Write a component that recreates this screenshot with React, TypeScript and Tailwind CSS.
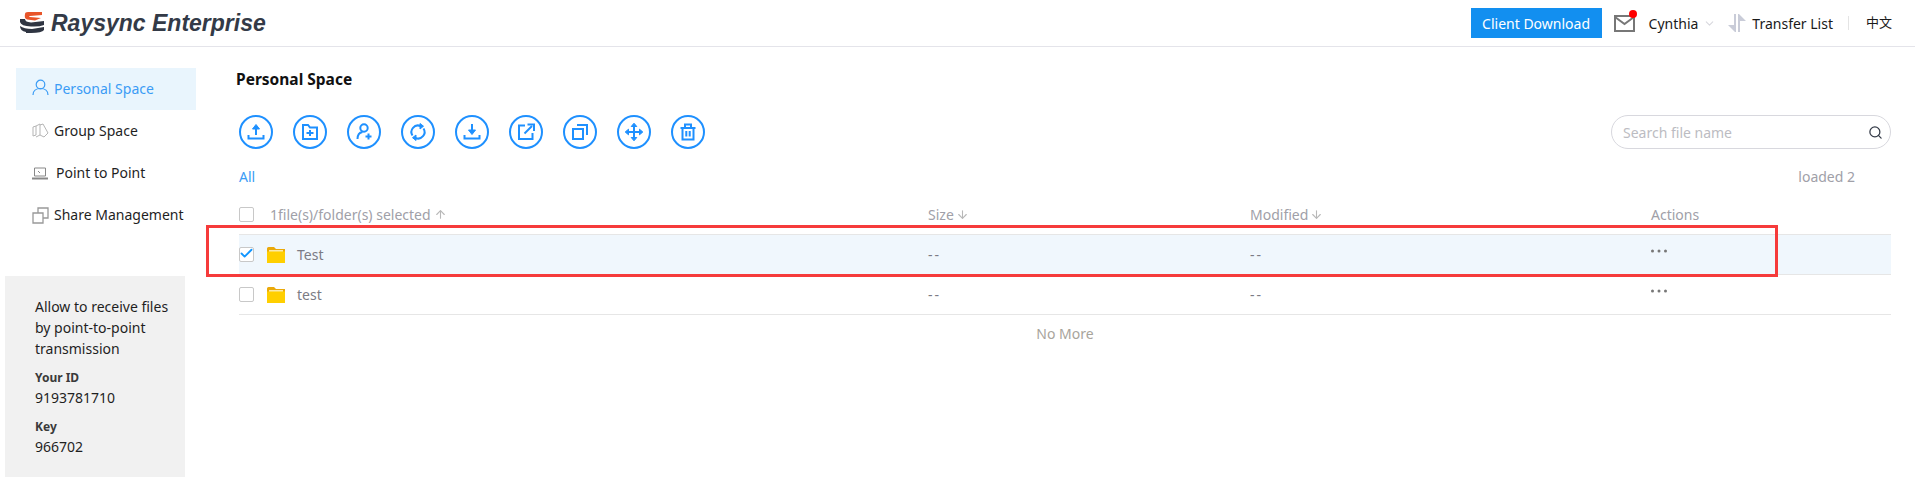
import { ChevronDown, Search, ArrowUp, ArrowDown, Check } from "lucide-react";

const font = "font-['Noto_Sans','Noto_Sans_CJK_SC',sans-serif]";

function Logo() {
  return (
    <svg width="26" height="24" viewBox="0 0 26 24" className="shrink-0">
      <path d="M6 3 Q6 1 9 1 L23 1 L23 4 L11 5 Q9 5.500 11 6 L22 7 L16 9.500 L8 8.500 Q5 7.500 6 3Z" fill="#e8552a" />
      <path d="M1 8 L6 8 Q6 11 12 11.500 L25 10 L25 14 Q20 16 12 15.500 Q2 15 1 11Z" fill="#2f3542" />
      <path d="M1 15 Q5 18 13 18 L25 16 L25 19 Q23 22 12 22 L7 22 L7 21 Q1 20 1 15Z" fill="#2f3542" />
    </svg>
  );
}

function RoundIcon({ children }: { children: React.ReactNode }) {
  return (
    <button className="w-[34px] h-[34px] rounded-full border-2 border-[#1e90ff] flex items-center justify-center shrink-0">
      <svg width="20" height="20" viewBox="0 0 20 20" fill="none" stroke="#1e90ff" strokeWidth="2">
        {children}
      </svg>
    </button>
  );
}

const toolbar = [
  <>
    <path d="M10 13V6" />
    <path d="M6.500 7 L10 2.500 L13.500 7Z" fill="#1e90ff" strokeWidth="1" />
    <path d="M2.500 13v3.500h15V13" />
  </>,
  <>
    <path d="M3 3h5l2 2.500h7V17H3Z" />
    <path d="M6.500 11h7M10 8v6" />
  </>,
  <>
    <circle cx="10" cy="6" r="3.700" />
    <path d="M3.500 17c0-4 2-6.500 5-7" />
    <path d="M11.500 14.500h6M14.500 11.500v6" />
  </>,
  <>
    <path d="M4.500 13.500A6.500 6.500 0 0 1 12.500 4" />
    <path d="M15.500 6.500A6.500 6.500 0 0 1 7.500 16" />
    <path d="M12 1.500v5.500l3.500-2.800Z" fill="#1e90ff" strokeWidth="1" />
    <path d="M8 13v5.500l-3.500-2.800Z" fill="#1e90ff" strokeWidth="1" />
  </>,
  <>
    <path d="M10 2v7" />
    <path d="M6.500 8 L10 12.500 L13.500 8Z" fill="#1e90ff" strokeWidth="1" />
    <path d="M2.500 13v3.500h15V13" />
  </>,
  <>
    <path d="M9 3.500H3V17h13.500v-6" />
    <path d="M8.500 11.500 16 4" />
    <path d="M11.500 2.500h6.500V9" strokeWidth="2" />
  </>,
  <>
    <path d="M3 7h10v10H3Z" />
    <path d="M7 3h10v10" />
  </>,
  <>
    <path d="M10 3v14M3 10h14" />
    <path d="M7.200 4.500 10 1.200l2.800 3.300ZM7.200 15.500l2.800 3.300 2.800-3.300ZM4.500 7.200 1.200 10l3.300 2.800ZM15.500 7.200l3.300 2.800-3.300 2.800Z" fill="#1e90ff" strokeWidth="1" />
  </>,
  <>
    <path d="M2.500 6h15" />
    <path d="M7 6V2.500h6V6" />
    <path d="M4.500 6v11.500h11V6" />
    <path d="M8.300 9v5.500M11.700 9v5.500" />
  </>,
];

function Folder() {
  return (
    <svg width="18" height="16" viewBox="0 0 18 16" className="shrink-0">
      <path d="M0 1.500Q0 0 1.500 0H7l2 2h9v14H0Z" fill="#eaa90a" />
      <rect x="2" y="3" width="14" height="2" fill="#fbe9a8" />
      <rect y="4.500" width="18" height="11.500" fill="#ffcf00" />
    </svg>
  );
}

function Box({ checked }: { checked?: boolean }) {
  return (
    <span className="relative w-[15px] h-[15px] rounded-[2px] border border-[#c8c8c8] bg-white shrink-0">
      {checked && <Check size={15} strokeWidth={3} className="absolute -left-[1px] -top-[2px] text-[#1296ff]" />}
    </span>
  );
}

function Dots() {
  return (
    <svg width="16" height="4" viewBox="0 0 16 4" fill="#777" className="-mt-[7px]">
      <circle cx="1.500" cy="2" r="1.500" />
      <circle cx="8" cy="2" r="1.500" />
      <circle cx="14.500" cy="2" r="1.500" />
    </svg>
  );
}

function NavItem({ label, icon, active, gap }: { label: string; icon: React.ReactNode; active?: boolean; gap?: string }) {
  return (
    <div className={`h-[42px] flex items-center pl-[16px] ${gap ?? "gap-[7px]"} ${active ? "bg-[#e9f5fd] text-[#3b9cf5]" : "text-[#1f1f1f]"}`}>
      {icon}
      <span className="text-[14px] pb-[2px]">{label}</span>
    </div>
  );
}

function Row({ name, selected }: { name: string; selected?: boolean }) {
  return (
    <div className={`h-[40px] flex items-center border-b border-[#e6e6e6] text-[14px] text-[#7b7b85] ${selected ? "bg-[#f0f7fd]" : ""}`}>
      <div className="w-[689px] flex items-center">
        <Box checked={selected} />
        <span className="ml-[13px]"><Folder /></span>
        <span className="ml-[12px]">{name}</span>
      </div>
      <div className="w-[322px] tracking-[2px]">--</div>
      <div className="w-[401px] tracking-[2px]">--</div>
      <Dots />
    </div>
  );
}

export default function App() {
  return (
    <div className={`${font} relative w-[1915px] h-[496px] bg-white overflow-hidden`}>
      {/* header */}
      <header className="h-[47px] border-b border-[#e4e4ea] flex items-center justify-between pl-[19px] pr-[23px]">
        <div className="flex items-center gap-[6px]">
          <Logo />
          <span className="font-['Liberation_Sans',sans-serif] italic font-bold text-[23px] text-[#333a47]">Raysync Enterprise</span>
        </div>
        <div className="flex items-center text-[14px] text-[#1a1a1a]">
          <div className="w-[131px] h-[30px] bg-[#128ff0] text-white flex items-center justify-center">Client Download</div>
          <div className="relative ml-[12px]">
            <svg width="21" height="18" viewBox="0 0 21 18" fill="none" stroke="#777" strokeWidth="2">
              <path d="M1 2h19v15H1Z" />
              <path d="M1 3l9.500 7L20 3" />
            </svg>
            <span className="absolute -top-[4px] -right-[2px] w-[8px] h-[8px] rounded-full bg-[#f00]" />
          </div>
          <span className="ml-[14px]">Cynthia</span>
          <ChevronDown size={13} className="ml-[5px] text-[#d8d8de]" />
          <svg width="18" height="20" viewBox="0 0 18 20" className="ml-[12px]" fill="#c9ccd8">
            <path d="M6 1h2v18h-1L0 12h6ZM10 1h1l7 7h-6v11h-2Z" />
          </svg>
          <span className="ml-[6px]">Transfer List</span>
          <span className="w-px h-[14px] bg-[#e4e4e4] ml-[15px]" />
          <span className="ml-[17px] text-[13px]">中文</span>
        </div>
      </header>

      <div className="flex">
        {/* sidebar */}
        <aside className="w-[196px] pt-[21px] shrink-0">
          <div className="ml-[16px]">
            <NavItem
              active
              label="Personal Space"
              gap="gap-[5px]"
              icon={
                <svg width="17" height="17" viewBox="0 0 17 17" fill="none" stroke="#3b9cf5" strokeWidth="1.200" className="-mt-[4px]">
                  <circle cx="8.500" cy="5.500" r="4.300" />
                  <path d="M1 16c0-4 3-6.500 7.500-6.500S16 12 16 16" />
                </svg>
              }
            />
            <NavItem
              label="Group Space"
              gap="gap-[5px]"
              icon={
                <svg width="17" height="16" viewBox="0 0 17 16" fill="none" stroke="#b5b5b5">
                  <path d="M1 4l3-1v9l-3 1ZM4 3l4-2v11l-4 2M8 2l3-1 5 9-4 4-4-2" />
                </svg>
              }
            />
            <NavItem
              label="Point to Point"
              gap="gap-[8px]"
              icon={
                <svg width="16" height="13" viewBox="0 0 16 13" fill="none" stroke="#888">
                  <path d="M2.500 1h11v8h-11Z" />
                  <path d="M0 11.500h16" strokeWidth="2" />
                  <path d="M6 4l2 2" />
                </svg>
              }
            />
            <NavItem
              label="Share Management"
              gap="gap-[5px]"
              icon={
                <svg width="17" height="17" viewBox="0 0 17 17" fill="none" stroke="#999" strokeWidth="1.300">
                  <path d="M1 6h10v10H1Z" />
                  <path d="M6 6V1h10v10h-5" />
                </svg>
              }
            />
          </div>
          <div className="mt-[40px] ml-[5px] w-[180px] h-[201px] bg-[#f1f1f1] pl-[30px] pt-[20px] text-[14px] text-[#1f1f1f]">
            <p className="leading-[21px] w-[146px]">Allow to receive files by point-to-point transmission</p>
            <p className="mt-[9px] text-[12px] font-bold text-[#3a3a3a] leading-[20px]">Your ID</p>
            <p className="leading-[19px]">9193781710</p>
            <p className="mt-[10px] text-[12px] font-bold text-[#3a3a3a] leading-[20px]">Key</p>
            <p className="leading-[19px]">966702</p>
          </div>
        </aside>

        {/* main */}
        <main className="flex-1 pl-[40px] pr-[24px] pt-[21px]">
          <h1 className="text-[15.500px] font-bold text-[#111] leading-[22px]">Personal Space</h1>
          <div className="mt-[25px] pl-[3px] flex items-center justify-between">
            <div className="flex gap-[20px]">
              {toolbar.map((icon, i) => (
                <RoundIcon key={i}>{icon}</RoundIcon>
              ))}
            </div>
            <div className="w-[280px] h-[34px] rounded-full border border-[#d8d8de] flex items-center justify-between pl-[11px] pr-[7px] text-[14px] text-[#bcbcc2]">
              <span>Search file name</span>
              <Search size={15} className="text-[#333a47]" />
            </div>
          </div>
          <div className="mt-[18px] pl-[3px] pr-[36px] flex justify-between text-[14px] leading-[20px]">
            <span className="text-[#3b9cf5]">All</span>
            <span className="text-[#a0a0a8]">loaded 2</span>
          </div>

          {/* table */}
          <div className="mt-[8px] ml-[3px]">
            <div className="h-[40px] flex items-center border-b border-[#e6e6e6] text-[14px] text-[#a0a0a8]">
              <div className="w-[689px] flex items-center">
                <Box />
                <span className="ml-[16px]">1file(s)/folder(s) selected</span>
                <ArrowUp size={13} className="ml-[3px] text-[#b8b8b8]" />
              </div>
              <div className="w-[322px] flex items-center">Size<ArrowDown size={13} className="ml-[2px] text-[#b8b8b8]" /></div>
              <div className="w-[401px] flex items-center">Modified<ArrowDown size={13} className="ml-[2px] text-[#b8b8b8]" /></div>
              <div>Actions</div>
            </div>
            <Row name="Test" selected />
            <Row name="test" />
            <div className="h-[36px] flex items-center justify-center text-[14px] text-[#a8a49c]">No More</div>
          </div>
        </main>
      </div>

      {/* annotation drawn on top of the screenshot */}
      <div className="absolute left-[206px] top-[225px] w-[1572px] h-[52px] border-[3px] border-[#f63b3b]" />
    </div>
  );
}
